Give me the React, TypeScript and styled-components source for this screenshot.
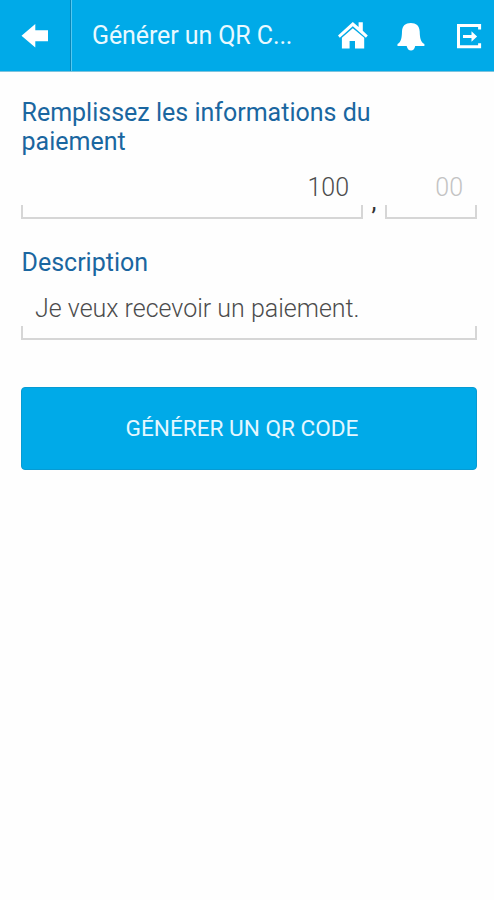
import React from "react";
import styled, { createGlobalStyle } from "styled-components";

const GlobalStyle = createGlobalStyle`
  * { box-sizing: border-box; }
  body { margin: 0; background: #fefefe; }
  button, input { font: inherit; }
`;

const Screen = styled.div`
  width: 100%;
  min-height: 900px;
  background: #fefefe;
  font-family: Roboto, "Liberation Sans", sans-serif;
`;

const Header = styled.header`
  display: flex;
  height: 72px;
  background: #00aae8;
  border-bottom: 1px solid #7cc3dd;
  color: #e9f9ff;
`;

const IconButton = styled.button<{ $width: number }>`
  display: block;
  flex: none;
  width: ${(p) => p.$width}px;
  height: 71px;
  padding: 0;
  border: 0;
  background: none;
  color: #fff;

  svg { display: block; }
`;

const BackButton = styled(IconButton)`
  border-right: 1px solid #0786b8;
  box-shadow: 1px 0 0 #55c8f0;
`;

const Title = styled.h1`
  flex: 1;
  margin: 0;
  padding-left: 21px;
  font-size: 25px;
  font-weight: 400;
  line-height: 72px;
  letter-spacing: -0.1px;
  white-space: nowrap;
`;

const Form = styled.form`
  display: flex;
  flex-direction: column;
  padding: 26px 17px 0 21px;
`;

const Label = styled.label`
  display: block;
  padding-left: 0.5px;
  font-size: 25px;
  line-height: 29px;
  color: #1a66a0;
`;

const AmountRow = styled.div`
  display: flex;
  margin: 15px 0 29px;
`;

const Field = styled.div<{ $width?: number }>`
  width: ${(p) => (p.$width ? `${p.$width}px` : "100%")};
  height: 48px;
  border: 2px solid;
  border-top: 0;
  border-image: linear-gradient(to bottom, transparent 35px, #d6d6d6 35px) 2;
`;

const DescriptionField = styled(Field)`
  margin-top: 15px;
`;

const Input = styled.input<{ $align?: string }>`
  display: block;
  width: 100%;
  height: 32px;
  padding: 0 12px;
  border: 0;
  outline: 0;
  background: transparent;
  color: #4c4c4c;
  font-size: 25px;
  font-weight: 300;
  text-align: ${(p) => p.$align ?? "left"};

  &::placeholder { color: #c3c3c3; opacity: 1; }
`;

const Comma = styled.span`
  width: 22px;
  padding-top: 17px;
  font-size: 25px;
  line-height: 28px;
  text-align: center;
  color: #333;
`;

const Submit = styled.button`
  height: 83px;
  margin-top: 47px;
  padding: 0 14px 0 0;
  border: 1px solid #079bd3;
  border-radius: 4px;
  background: #00aae8;
  color: #e4f7ff;
  font-size: 22.6px;
  line-height: 81px;
`;

const BackIcon = () => (
  <svg width="70" height="71" viewBox="0 0 70 71" fill="currentColor">
    <path d="M21.5 35.8 35.3 24v6.2H48v11H35.3v6.3z" />
  </svg>
);

const HomeIcon = () => (
  <svg width="58" height="71" viewBox="324 0 58 71" fill="currentColor">
    <path d="M352.8 22 338 35.5l1.8 2.2 13-11.5 13.1 11.5 1.9-2.2-5-4.7v-8.6h-4.2v4.9z" />
    <path d="m352.8 28.2-10.9 9.6v10.8h7.7v-7.7h5.4v7.7h9.2V37.8z" />
  </svg>
);

const BellIcon = () => (
  <svg width="58" height="71" viewBox="382 0 58 71" fill="currentColor">
    <path d="M410.8 23c-5.3 0-8.6 2.7-8.8 8.5-.2 7-.9 10.4-4.5 12.6v2h26.9v-2c-3.7-2.2-4.5-5.6-4.7-12.6-.2-5.8-3.6-8.5-8.9-8.5z" />
    <path d="M406.7 46h8.5c-.7 3.2-2.1 4.4-4.2 4.4-2.2 0-3.6-1.2-4.3-4.4z" />
  </svg>
);

const ExitIcon = () => (
  <svg width="54" height="71" viewBox="440 0 54 71">
    <path d="M479.6 29.5v-4H458.5v21.2h21.1v-3.5" fill="none" stroke="currentColor" strokeWidth="3" />
    <path d="M463 35h8.5v-3.7l5.6 5.2-5.6 5.2V38H463z" fill="currentColor" />
  </svg>
);

export default function App() {
  return (
    <Screen>
      <GlobalStyle />
      <Header>
        <BackButton $width={71} aria-label="Retour"><BackIcon /></BackButton>
        <Title>Générer un QR C...</Title>
        <IconButton $width={58} aria-label="Accueil"><HomeIcon /></IconButton>
        <IconButton $width={58} aria-label="Notifications"><BellIcon /></IconButton>
        <IconButton $width={54} aria-label="Déconnexion"><ExitIcon /></IconButton>
      </Header>
      <Form onSubmit={(e) => e.preventDefault()}>
        <Label htmlFor="amount">Remplissez les informations du paiement</Label>
        <AmountRow>
          <Field $width={342}><Input id="amount" $align="right" defaultValue="100" /></Field>
          <Comma>,</Comma>
          <Field $width={92}><Input $align="right" placeholder="00" aria-label="Centimes" /></Field>
        </AmountRow>
        <Label htmlFor="description">Description</Label>
        <DescriptionField><Input id="description" defaultValue="Je veux recevoir un paiement." /></DescriptionField>
        <Submit type="submit">GÉNÉRER UN QR CODE</Submit>
      </Form>
    </Screen>
  );
}
